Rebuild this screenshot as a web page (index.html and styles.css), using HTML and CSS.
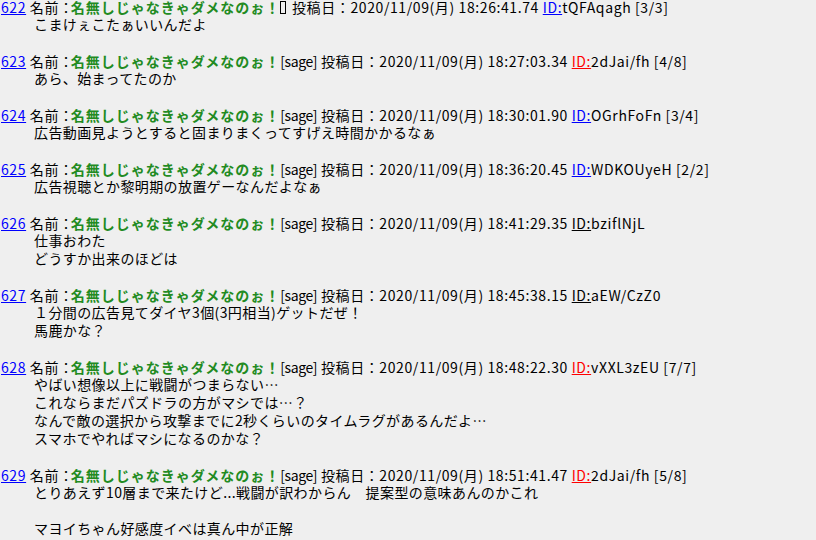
FILE: index.html
```html
<!doctype html>
<html>
<head>
<meta charset="utf-8">
<title>スレッド</title>
<link rel="stylesheet" href="styles.css">
</head>
<body>
<dl class="thread">
	<dt class="post-head"><a href="#" class="num">622</a> 名前：<b class="name">名無しじゃなきゃダメなのぉ！</b><span class="tofu"></span> 投稿日：2020/11/09(月) 18:26:41.74 <a href="#" class="id">ID:</a>tQFAqagh [3/3]</dt>
	<dd class="post-body">こまけぇこたぁいいんだよ</dd>

	<dt class="post-head"><a href="#" class="num">623</a> 名前：<b class="name">名無しじゃなきゃダメなのぉ！</b><span class="mail">[sage]</span> 投稿日：2020/11/09(月) 18:27:03.34 <a href="#" class="id hot">ID:</a>2dJai/fh [4/8]</dt>
	<dd class="post-body">あら、始まってたのか</dd>

	<dt class="post-head"><a href="#" class="num">624</a> 名前：<b class="name">名無しじゃなきゃダメなのぉ！</b><span class="mail">[sage]</span> 投稿日：2020/11/09(月) 18:30:01.90 <a href="#" class="id">ID:</a>OGrhFoFn [3/4]</dt>
	<dd class="post-body">広告動画見ようとすると固まりまくってすげえ時間かかるなぁ</dd>

	<dt class="post-head"><a href="#" class="num">625</a> 名前：<b class="name">名無しじゃなきゃダメなのぉ！</b><span class="mail">[sage]</span> 投稿日：2020/11/09(月) 18:36:20.45 <a href="#" class="id">ID:</a>WDKOUyeH [2/2]</dt>
	<dd class="post-body">広告視聴とか黎明期の放置ゲーなんだよなぁ</dd>

	<dt class="post-head"><a href="#" class="num">626</a> 名前：<b class="name">名無しじゃなきゃダメなのぉ！</b><span class="mail">[sage]</span> 投稿日：2020/11/09(月) 18:41:29.35 <span class="id plain">ID:</span>bziflNjL</dt>
	<dd class="post-body">仕事おわた<br>どうすか出来のほどは</dd>

	<dt class="post-head"><a href="#" class="num">627</a> 名前：<b class="name">名無しじゃなきゃダメなのぉ！</b><span class="mail">[sage]</span> 投稿日：2020/11/09(月) 18:45:38.15 <span class="id plain">ID:</span>aEW/CzZ0</dt>
	<dd class="post-body">１分間の広告見てダイヤ3個(3円相当)ゲットだぜ！<br>馬鹿かな？</dd>

	<dt class="post-head"><a href="#" class="num">628</a> 名前：<b class="name">名無しじゃなきゃダメなのぉ！</b><span class="mail">[sage]</span> 投稿日：2020/11/09(月) 18:48:22.30 <a href="#" class="id hot">ID:</a>vXXL3zEU [7/7]</dt>
	<dd class="post-body">やばい想像以上に戦闘がつまらない…<br>これならまだパズドラの方がマシでは…？<br>なんで敵の選択から攻撃までに2秒くらいのタイムラグがあるんだよ…<br>スマホでやればマシになるのかな？</dd>

	<dt class="post-head"><a href="#" class="num">629</a> 名前：<b class="name">名無しじゃなきゃダメなのぉ！</b><span class="mail">[sage]</span> 投稿日：2020/11/09(月) 18:51:41.47 <a href="#" class="id hot">ID:</a>2dJai/fh [5/8]</dt>
	<dd class="post-body">とりあえず10層まで来たけど...戦闘が訳わからん　提案型の意味あんのかこれ<br><br>マヨイちゃん好感度イベは真ん中が正解</dd>
</dl>
</body>
</html>
```

FILE: styles.css
```css
*{margin:0;padding:0;}
body{ background:#efefef; color:#000; font-family:"Noto Sans CJK JP","Liberation Sans",sans-serif; font-size:14px; line-height:18px; }
.thread{ margin-top:-2px; padding-left:1px; }
.post-head{ white-space:nowrap; letter-spacing:0.6px; }
.post-body{ margin:-1px 0 19px 33px; letter-spacing:0.4px; }
.num{ color:#0000ff; text-decoration:underline; }
.name{ color:#228b22; letter-spacing:1px; margin-left:-3px; }
.mail{ letter-spacing:-0.4px; }
.id{ color:#0000ff; text-decoration:underline; }
.id.hot{ color:#ff0000; }
.id.plain{ color:#000; }
.tofu{ display:inline-block; width:4px; height:11px; border:1px solid #000; margin:0 2px 0 0; vertical-align:-1px; }
```
